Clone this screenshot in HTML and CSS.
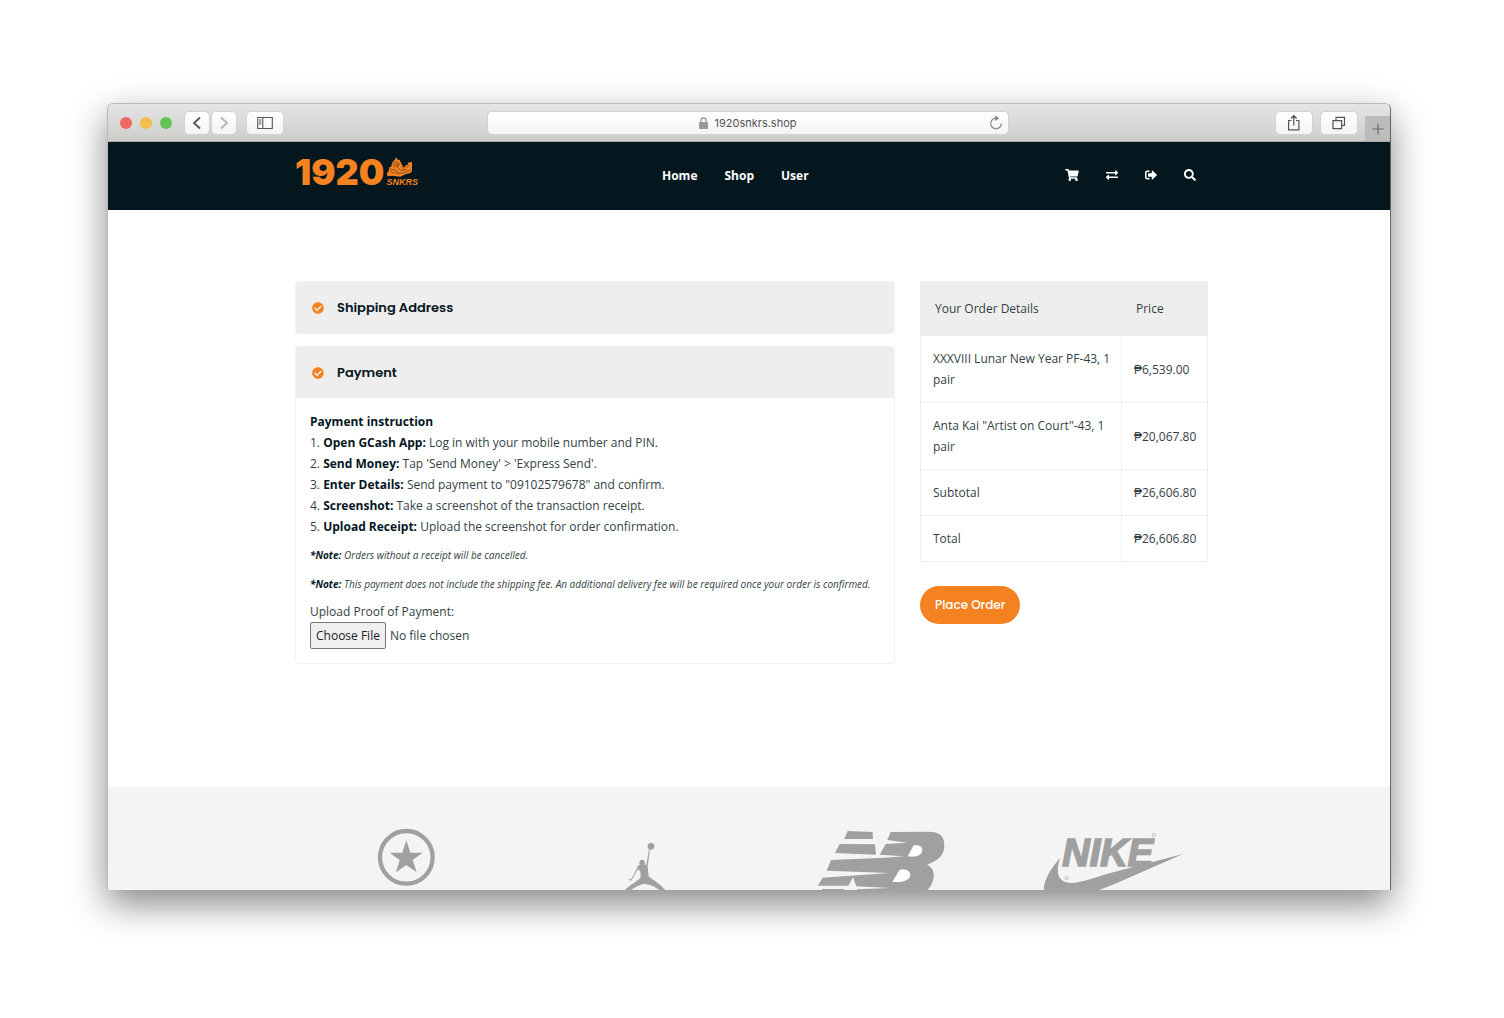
FILE: index.html
```html
<!DOCTYPE html>
<html lang="en">
<head>
<meta charset="utf-8">
<meta name="viewport" content="width=device-width, initial-scale=1">
<title>1920 SNKRS – Checkout</title>
<link rel="stylesheet" href="styles.css">
</head>
<body>
<div class="window">
  <div class="toolbar">
    <div class="lights"><span class="light red"></span><span class="light amber"></span><span class="light green"></span></div>
    <div class="history">
      <button class="tool small" type="button" aria-label="Back"><svg width="14" height="16" viewBox="0 0 14 16"><path d="M10 2.500 4 8l6 5.500" fill="none" stroke="#555" stroke-width="1.800"/></svg></button>
      <button class="tool small" type="button" aria-label="Forward"><svg width="14" height="16" viewBox="0 0 14 16"><path d="m4 2.500 6 5.500-6 5.500" fill="none" stroke="#b5b5b5" stroke-width="1.800"/></svg></button>
    </div>
    <button class="tool" type="button" aria-label="Sidebar"><svg width="16" height="14" viewBox="0 0 16 14"><path d="M.7 1.500h14.600v11H.7zM5.800 1.500v11M2 4h2.300M2 6h2.300M2 8h2.300" fill="none" stroke="#555" stroke-width="1.100"/></svg></button>
    <div class="address">
      <svg width="9" height="12" viewBox="0 0 9 12"><rect y="5" width="9" height="7" rx="1" fill="#999"/><path d="M2 5.500V3.500a2.500 2.500 0 0 1 5 0v2" fill="none" stroke="#999" stroke-width="1.300"/></svg>
      <span>1920snkrs.shop</span>
      <button class="reload" type="button" aria-label="Reload"><svg width="14" height="16" viewBox="0 0 14 16"><path d="M7 3.200a5.300 5.300 0 1 0 5.300 5.300" fill="none" stroke="#888" stroke-width="1.200"/><path d="M6 .5 10.500 3.200 6 6z" fill="#888"/></svg></button>
    </div>
    <button class="tool" type="button" aria-label="Share"><svg width="14" height="18" viewBox="0 0 14 18"><path d="M4.500 6.500H1.600v9.300h10.300V6.500H9M6.800 11.500V2M4 4.500 6.800 1.700 9.600 4.500" fill="none" stroke="#555" stroke-width="1.200"/></svg></button>
    <button class="tool" type="button" aria-label="Show tabs"><svg width="14" height="14" viewBox="0 0 14 14"><path d="M1 4.600h8.600v8H1zM4 4.400V1.400h8.500v8H9.800" fill="none" stroke="#555" stroke-width="1.200"/></svg></button>
    <button class="newtab" type="button" aria-label="New tab"><svg width="12" height="12" viewBox="0 0 12 12"><path d="M6 .5v11M.5 6h11" stroke="#666" stroke-width="1.100"/></svg></button>
  </div>

  <header class="header">
    <a class="logo" href="#"><span class="year">1920</span><span class="mark">
      <svg width="26" height="21" viewBox="0 0 78 63"><path fill="#f58220" d="M3 48 8 42l2-12 6-1 2-12 8-8 4-8 6 8 5-1 3 8 9 16 7-8 5-1 1-6 8-2 5 2 2 10 3 12-13 10-13 3-15 7-23-3-16 2z"/><path d="m19 20 11-5M21 25l13-5M24 30l14-6M11 36l16 3 12 8M40 17l-6 14 13 10 16-4M48 31l9 8M54 25l11 6M61 19l9 9M12 44l23 6 22-3 18-9M32 12l5 12" fill="none" stroke="#04171f" stroke-width="1.300"/></svg>
      <span class="word">SNKRS</span></span></a>
    <nav class="nav"><a href="#">Home</a><a href="#">Shop</a><a href="#">User</a></nav>
    <div class="actions">
      <a href="#" aria-label="Cart"><svg width="14" height="12" viewBox="0 0 576 512"><path d="M528.120 301.319l47.273-208C578.806 78.301 567.391 64 551.990 64H159.208l-9.166-44.810C147.758 8.021 137.930 0 126.529 0H24C10.745 0 0 10.745 0 24v16c0 13.255 10.745 24 24 24h69.883l70.248 343.435C147.325 417.100 136 435.222 136 456c0 30.928 25.072 56 56 56s56-25.072 56-56c0-15.674-6.447-29.835-16.824-40h209.647C430.447 426.165 424 440.326 424 456c0 30.928 25.072 56 56 56s56-25.072 56-56c0-22.172-12.888-41.332-31.579-50.405l5.517-24.276c3.413-15.018-8.002-29.319-23.403-29.319H218.117l-6.545-32h293.145c11.206 0 20.920-7.754 23.403-18.681z"/></svg></a>
      <a href="#" aria-label="Compare"><svg width="12" height="12" viewBox="0 0 512 512"><path d="M0 168v-16c0-13.255 10.745-24 24-24h360V80c0-21.367 25.899-32.042 40.971-16.971l80 80c9.372 9.373 9.372 24.569 0 33.941l-80 80C409.956 271.982 384 261.456 384 240v-48H24c-13.255 0-24-10.745-24-24zm488 152H128v-48c0-21.314-25.862-32.080-40.971-16.971l-80 80c-9.372 9.373-9.372 24.569 0 33.941l80 80C102.057 463.997 128 453.437 128 432v-48h360c13.255 0 24-10.745 24-24v-16c0-13.255-10.745-24-24-24z"/></svg></a>
      <a href="#" aria-label="Log out"><svg width="12" height="12" viewBox="0 0 512 512"><path d="M497 273L329 441c-15 15-41 4.500-41-17v-96H152c-13.300 0-24-10.700-24-24v-96c0-13.300 10.700-24 24-24h136V88c0-21.400 25.900-32 41-17l168 168c9.300 9.400 9.300 24.600 0 34zM192 436v-40c0-6.600-5.400-12-12-12H96c-17.700 0-32-14.300-32-32V160c0-17.700 14.300-32 32-32h84c6.600 0 12-5.400 12-12V76c0-6.600-5.400-12-12-12H96c-53 0-96 43-96 96v192c0 53 43 96 96 96h84c6.600 0 12-5.400 12-12z"/></svg></a>
      <a href="#" aria-label="Search"><svg width="12" height="12" viewBox="0 0 512 512"><path d="M505 442.700L405.300 343c-4.500-4.500-10.600-7-17-7H372c27.600-35.300 44-79.700 44-128C416 93.100 322.900 0 208 0S0 93.100 0 208s93.100 208 208 208c48.300 0 92.700-16.400 128-44v16.300c0 6.400 2.500 12.500 7 17l99.700 99.700c9.400 9.400 24.600 9.400 33.900 0l28.300-28.300c9.400-9.400 9.400-24.600.1-34zM208 336c-70.700 0-128-57.200-128-128 0-70.700 57.200-128 128-128 70.700 0 128 57.200 128 128 0 70.700-57.200 128-128 128z"/></svg></a>
    </div>
  </header>

  <main class="checkout">
    <div class="steps">
      <section class="card">
        <h2 class="card-title"><svg width="12" height="12" viewBox="0 0 512 512"><path d="M504 256c0 136.967-111.033 248-248 248S8 392.967 8 256 119.033 8 256 8s248 111.033 248 248zM227.314 387.314l184-184c6.248-6.248 6.248-16.379 0-22.627l-22.627-22.627c-6.248-6.249-16.379-6.249-22.628 0L216 308.118l-70.059-70.059c-6.248-6.248-16.379-6.248-22.628 0l-22.627 22.627c-6.248 6.248-6.248 16.379 0 22.627l104 104c6.249 6.249 16.379 6.249 22.628.001z"/></svg>Shipping Address</h2>
      </section>
      <section class="card">
        <h2 class="card-title"><svg width="12" height="12" viewBox="0 0 512 512"><path d="M504 256c0 136.967-111.033 248-248 248S8 392.967 8 256 119.033 8 256 8s248 111.033 248 248zM227.314 387.314l184-184c6.248-6.248 6.248-16.379 0-22.627l-22.627-22.627c-6.248-6.249-16.379-6.249-22.628 0L216 308.118l-70.059-70.059c-6.248-6.248-16.379-6.248-22.628 0l-22.627 22.627c-6.248 6.248-6.248 16.379 0 22.627l104 104c6.249 6.249 16.379 6.249 22.628.001z"/></svg>Payment</h2>
        <div class="card-body">
          <p><b>Payment instruction</b></p>
          <p>1. <b>Open GCash App:</b> Log in with your mobile number and PIN.</p>
          <p>2. <b>Send Money:</b> Tap 'Send Money' &gt; 'Express Send'.</p>
          <p>3. <b>Enter Details:</b> Send payment to "09102579678" and confirm.</p>
          <p>4. <b>Screenshot:</b> Take a screenshot of the transaction receipt.</p>
          <p>5. <b>Upload Receipt:</b> Upload the screenshot for order confirmation.</p>
          <p class="note"><b>*Note:</b> Orders without a receipt will be cancelled.</p>
          <p class="note"><b>*Note:</b> This payment does not include the shipping fee. An additional delivery fee will be required once your order is confirmed.</p>
          <label class="upload-label" for="proof">Upload Proof of Payment:</label>
          <input class="upload" id="proof" type="file">
        </div>
      </section>
    </div>

    <aside class="summary">
      <table class="order">
        <thead><tr><th>Your Order Details</th><th class="price">Price</th></tr></thead>
        <tbody>
          <tr><td>XXXVIII Lunar New Year PF-43, 1 pair</td><td>₱6,539.00</td></tr>
          <tr><td>Anta Kai "Artist on Court"-43, 1 pair</td><td>₱20,067.80</td></tr>
          <tr><td>Subtotal</td><td>₱26,606.80</td></tr>
          <tr><td>Total</td><td>₱26,606.80</td></tr>
        </tbody>
      </table>
      <button class="place" type="button">Place Order</button>
    </aside>
  </main>

  <footer class="brands">
    <svg class="brand" viewBox="-84 15 450 225" role="img" aria-label="Converse"><circle cx="142" cy="127" r="79" fill="none" stroke="#a0a0a0" stroke-width="13"/><path d="m142 76 12 37h37l-30 22 12 37-31-22-31 22 11-37-30-22h38z"/></svg>
    <svg class="brand" viewBox="627 15 450 225" role="img" aria-label="Jordan"><circle cx="876" cy="94" r="10"/><path d="m873 102-7 52 3 30c14 12 34 22 50 42h-16c-17-13-30-17-48-20-14 4-28 10-40 20h-18c14-16 36-26 48-38l-1-18-7-8-15 26-6 9-9-3 9-2 8-12 13-28 6-4c-4-6-2-13 6-14 7 0 10 6 8 14l5 3 8-49z"/></svg>
    <svg class="brand" viewBox="18 15 450 225" role="img" aria-label="New Balance"><path d="m146 48 75 3 1 21h-86zM122 87l106 1 3 31-123-5zM96 135l160-7 60-4-74-5 18-32 64-4-59-8 10-24 110-1c40 0 51 13 51 43-1 28-18 44-52 56 16 8 22 20 20 38-2 20-12 34-30 48H176l-2-12 100-4-102-5-10-27-14 25H56l15-24 200-14-188-7z"/><path d="M70 222h66l-2 5H67z"/><path fill="#fff" d="m344 91-18 33c30 4 44-6 44-20 0-12-12-15-26-13zM302 164l-22 36c34 5 53-6 54-20 0-14-14-18-32-16z"/></svg>
    <svg class="brand" viewBox="729 15 450 225" role="img" aria-label="Nike"><path d="M784 128c-16 42-8 76 34 76 24 0 70-16 116-30l218-57-205 90-52 20H734c0-34 24-70 50-99z"/><text class="nike" x="790" y="154">NIKE</text><circle cx="1064" cy="60" r="5" fill="none" stroke="#a0a0a0" stroke-width="2"/><circle cx="803" cy="189" r="5" fill="none" stroke="#a0a0a0" stroke-width="2"/></svg>
  </footer>
</div>
</body>
</html>
```
FILE: styles.css
```css
* { box-sizing: border-box; }

body {
  margin: 0;
  min-height: 100vh;
  padding: 103px 113px 128px 107px;
  display: flex;
  flex-direction: column;
  background: #fff;
  color: #333f44;
  font: 12px/21px "Open Sans", sans-serif;
}

p, h2 { margin: 0; }
a { color: inherit; text-decoration: none; }
button { font: inherit; border: 0; padding: 0; }
svg { display: block; flex: none; }
b { color: #04171f; }

.window {
  flex: 1;
  display: flex;
  flex-direction: column;
  border: 1px solid #b9b9b9;
  border-right-color: #6b625b;
  border-bottom: 0;
  border-radius: 6px 6px 0 0;
  background: #fff;
  box-shadow: 0 14px 36px rgba(0, 0, 0, .48);
}

/* Browser toolbar */
.toolbar {
  height: 38px;
  display: flex;
  align-items: center;
  padding-left: 12px;
  border-radius: 5px 5px 0 0;
  border-bottom: 1px solid #aaa9a7;
  background: linear-gradient(#e5e5e5, #cdcdcc);
}
.lights { display: flex; gap: 8px; margin-right: 12px; }
.light { width: 12px; height: 12px; border-radius: 50%; }
.red { background: #ec6a5e; }
.amber { background: #f5bf4f; }
.green { background: #61c554; }
.history { display: flex; gap: 1px; margin-right: 9px; }
.tool {
  width: 38px;
  height: 24px;
  display: grid;
  place-items: center;
  border: 1px solid #d2d2d2;
  border-radius: 5px;
  background: linear-gradient(#fff, #f4f4f4);
}
.small { width: 26px; }
.tool + .tool { margin-left: 7px; }
.history .tool + .tool { margin-left: 0; }
.address {
  position: relative;
  flex: 0 1 522px;
  height: 24px;
  margin: 0 auto 0 203px;
  display: flex;
  align-items: center;
  justify-content: center;
  gap: 6px;
  border: 1px solid #d2d2d2;
  border-radius: 5px;
  background: linear-gradient(#fff, #f4f4f4);
  color: #555;
  font: 11px/16px Inter, sans-serif;
}
.reload { position: absolute; right: 5px; background: none; }
.newtab {
  width: 25px;
  height: 25px;
  margin-left: 7px;
  align-self: flex-end;
  display: grid;
  place-items: center;
  background: #bbbdbc;
}

/* Site header */
.header {
  height: 68px;
  display: grid;
  grid-template-columns: minmax(0, 367px) 1fr auto;
  align-items: center;
  padding: 0 194px 2px 187px;
  background: #04171f;
  color: #fff;
}
.logo { display: flex; align-items: flex-end; gap: 2px; color: #f58220; padding-bottom: 6px; }
.year { font: 900 36px/34px Inter, sans-serif; }
.mark { display: flex; flex-direction: column; padding-bottom: 3px; }
.word { font: italic bold 9px/8px "Liberation Sans", sans-serif; }
.nav { display: flex; gap: 27px; font-weight: 700; }
.actions { display: flex; gap: 27px; fill: #fff; }

/* Checkout */
.checkout {
  display: grid;
  grid-template-columns: minmax(0, 1fr) 288px;
  gap: 25px;
  align-items: start;
  padding: 71px 182px 123px 187px;
}
.steps { display: grid; gap: 12px; }
.card { border: 1px solid #f1f1f1; border-radius: 4px; }
.card-title {
  display: flex;
  align-items: center;
  gap: 13px;
  padding: 15px 16px;
  background: #eee;
  color: #04171f;
  font: 600 13px/21px Poppins, Inter, sans-serif;
}
.card-title svg { fill: #f58220; }
.card-body { padding: 13px 14px 14px; }
.note { margin-top: 8px; font-size: 10px; font-style: italic; }
.upload-label { display: block; margin-top: 6px; }
.upload { display: block; width: 100%; font: inherit; color: inherit; }
.upload::file-selector-button {
  height: 27px;
  margin: 0 4px 0 0;
  padding: 0 5px;
  border: 1px solid #767676;
  border-radius: 2px;
  background: #efefef;
  color: #222;
  font: inherit;
}

.order { width: 100%; border-collapse: collapse; table-layout: fixed; }
.order th {
  padding: 16px 14px;
  border: 1px solid #eee;
  background: #eee;
  text-align: left;
  font-weight: 400;
}
.order .price { width: 86px; }
.order td { padding: 12px 6px 12px 12px; border: 1px solid #eee; }
.place {
  height: 38px;
  margin-top: 24px;
  padding: 0 15px;
  border-radius: 19px;
  background: #f58220;
  color: #fff;
  font: 500 12px/18px Poppins, Inter, sans-serif;
}

/* Brand strip */
.brands {
  flex: 1 0 103px;
  height: 103px;
  overflow: hidden;
  display: grid;
  grid-template-columns: repeat(4, 1fr);
  justify-items: center;
  align-items: start;
  padding: 33px 155px 0 180px;
  background: #f4f4f4;
}
.brand { width: 150px; height: 75px; fill: #a0a0a0; }
.nike { font: italic bold 114px "Liberation Sans", sans-serif; stroke: #a0a0a0; stroke-width: 5px; }
```
